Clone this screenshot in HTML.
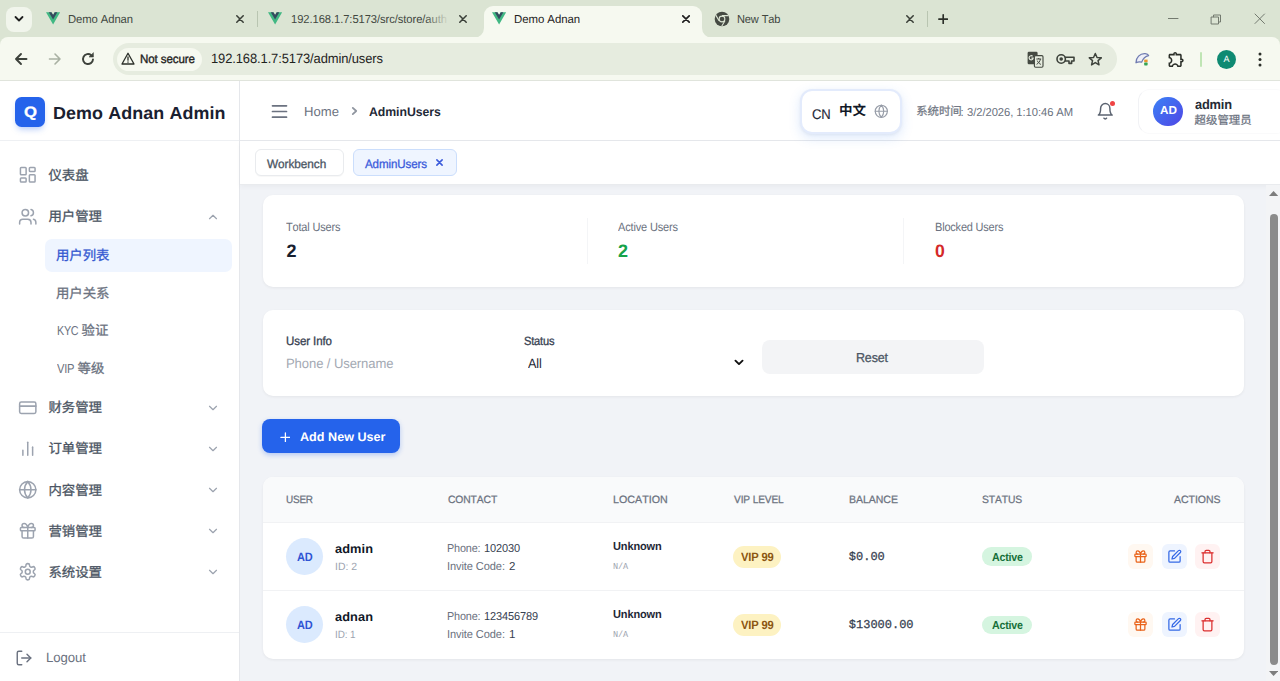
<!DOCTYPE html>
<html lang="en">
<head>
<meta charset="utf-8">
<title>Demo Adnan</title>
<style>
*{box-sizing:border-box;margin:0;padding:0}
html,body{width:1280px;height:681px;overflow:hidden;background:#f1f3f7}
body{font-family:"Liberation Sans",sans-serif;color:#1f2937;position:relative;-webkit-font-smoothing:antialiased;text-rendering:geometricPrecision;font-kerning:none}
.abs{position:absolute}
.tx{position:absolute;white-space:nowrap;line-height:1}
.b{font-weight:700}
.mono{font-family:"Liberation Mono",monospace}
.cj{display:inline-block;position:relative;vertical-align:top;white-space:nowrap;font-family:"Liberation Sans","Noto Sans CJK SC",sans-serif}
svg.ic{position:absolute;fill:none;stroke-linecap:round;stroke-linejoin:round}
/* ---------- browser chrome ---------- */
#tabstrip{left:0;top:0;width:1280px;height:48px;background:#dbe4d3}
#toolbar{left:0;top:37px;width:1280px;height:44px;background:#f6f9f0;border-bottom:1px solid #e0e4dc;border-radius:8px 8px 0 0}
#omni{left:113px;top:43px;width:1004px;height:32px;border-radius:16px;background:#e6ecdf}
#chip{left:117px;top:47.6px;width:85px;height:23.6px;border-radius:12px;background:#f6f9f0}
#tabsearch{left:6px;top:7px;width:26px;height:25px;border-radius:8px;background:#f1f5ec}
#acttab{left:484px;top:6px;width:218px;height:32px;background:#f6f9f0;border-radius:9px 9px 0 0}
/* ---------- app ---------- */
#sidebar{left:0;top:81px;width:240px;height:600px;background:#fff;border-right:1px solid #e5e7eb}
#header{left:240px;top:81px;width:1040px;height:60px;background:#fff;border-bottom:1px solid #e5e7eb}
#tabsbar{left:240px;top:141px;width:1040px;height:43.2px;background:#fff;box-shadow:0 1px 0 #e9ebee,0 3px 5px rgba(15,23,42,.035)}
.card{position:absolute;background:#fff;border-radius:10px;box-shadow:0 1px 3px rgba(0,0,0,.06)}
</style>
</head>
<body>

<!-- ================= BROWSER CHROME ================= -->
<div class="abs" id="tabstrip"></div>
<div class="abs" id="toolbar"></div>
<div class="abs" id="acttab"></div>
<div class="abs" id="tabsearch"></div>
<div class="abs" id="omni"></div>
<div class="abs" id="chip"></div>

<!-- tab search button -->
<svg class="ic" style="left:14px;top:15px" width="10" height="8" viewBox="0 0 10 8" stroke="#1f1f1f" stroke-width="1.8"><path d="M1.5 2 L5 5.5 L8.5 2"/></svg>
<!-- tab 1 -->
<svg class="abs" style="left:46px;top:12px" width="14.2" height="12.6" viewBox="0 0 256 221"><path fill="#41b883" d="M204.8 0H256L128 220.8 0 0h97.92L128 51.2 157.44 0h47.36Z"/><path fill="#35495e" d="M50.56 0 128 133.12 204.8 0h-47.36L128 51.2 97.92 0H50.56Z"/></svg>
<div class="tx" style="left:68.00px;top:14px;font-size:11.6px;letter-spacing:-0.086px;transform:scaleX(0.9729);transform-origin:0 0;color:#41473f">Demo Adnan</div>
<svg class="ic" style="left:236px;top:15px" width="8" height="8" viewBox="0 0 10 10" stroke="#3a3f38" stroke-width="1.9"><path d="M1 1 L9 9 M9 1 L1 9"/></svg>
<div class="abs" style="left:257px;top:11px;width:1px;height:16px;background:#b9c5b1"></div>
<!-- tab 2 -->
<svg class="abs" style="left:268px;top:12px" width="14.2" height="12.6" viewBox="0 0 256 221"><path fill="#41b883" d="M204.8 0H256L128 220.8 0 0h97.92L128 51.2 157.44 0h47.36Z"/><path fill="#35495e" d="M50.56 0 128 133.12 204.8 0h-47.36L128 51.2 97.92 0H50.56Z"/></svg>
<div class="tx" style="left:291.00px;top:14px;font-size:11.6px;letter-spacing:-0.078px;transform:scaleX(0.9662);transform-origin:0 0;color:#41473f">192.168.1.7:5173/src/store/auth</div>
<div class="abs" style="left:425px;top:8px;width:24px;height:22px;background:linear-gradient(90deg,rgba(219,228,211,0),#dbe4d3)"></div>
<svg class="ic" style="left:459px;top:15px" width="8" height="8" viewBox="0 0 10 10" stroke="#3a3f38" stroke-width="1.9"><path d="M1 1 L9 9 M9 1 L1 9"/></svg>
<!-- tab 3 active -->
<svg class="abs" style="left:474px;top:28px" width="10" height="10" viewBox="0 0 10 10"><path d="M10 0 V10 H0 A10 10 0 0 0 10 0Z" fill="#f6f9f0"/></svg>
<svg class="abs" style="left:702px;top:28px" width="10" height="10" viewBox="0 0 10 10"><path d="M0 0 V10 H10 A10 10 0 0 1 0 0Z" fill="#f6f9f0"/></svg>
<svg class="abs" style="left:492px;top:12px" width="14.2" height="12.6" viewBox="0 0 256 221"><path fill="#41b883" d="M204.8 0H256L128 220.8 0 0h97.92L128 51.2 157.44 0h47.36Z"/><path fill="#35495e" d="M50.56 0 128 133.12 204.8 0h-47.36L128 51.2 97.92 0H50.56Z"/></svg>
<div class="tx" style="left:514.00px;top:14px;font-size:11.6px;letter-spacing:-0.052px;transform:scaleX(0.9835);transform-origin:0 0;color:#1f231d">Demo Adnan</div>
<svg class="ic" style="left:682px;top:15px" width="8" height="8" viewBox="0 0 10 10" stroke="#1f1f1f" stroke-width="2.1"><path d="M1 1 L9 9 M9 1 L1 9"/></svg>
<!-- tab 4 -->
<svg class="abs" style="left:714px;top:11px" width="16" height="16" viewBox="0 0 16 16"><circle cx="8" cy="8" r="7.3" fill="#454a43"/><circle cx="8" cy="8" r="3.4" fill="#dbe4d3"/><circle cx="8" cy="8" r="2.3" fill="#454a43"/><path d="M8 4.6 H14.5 M5.05 9.7 L1.8 4.1 M10.95 9.7 L7.7 15.3" stroke="#dbe4d3" stroke-width="1.1" fill="none"/></svg>
<div class="tx" style="left:737.30px;top:14px;font-size:11.6px;letter-spacing:-0.146px;transform:scaleX(0.9535);transform-origin:0 0;color:#41473f">New Tab</div>
<svg class="ic" style="left:906px;top:15px" width="8" height="8" viewBox="0 0 10 10" stroke="#3a3f38" stroke-width="1.9"><path d="M1 1 L9 9 M9 1 L1 9"/></svg>
<div class="abs" style="left:927px;top:11px;width:1px;height:16px;background:#b9c5b1"></div>
<svg class="ic" style="left:938px;top:14px" width="10.4" height="10.4" viewBox="0 0 12 12" stroke="#2b2f29" stroke-width="1.9"><path d="M6 1 V11 M1 6 H11"/></svg>
<!-- window controls -->
<svg class="ic" style="left:1168px;top:13px" width="100" height="12" viewBox="0 0 100 12" stroke="#737a6f" stroke-width="1"><path d="M0 5.5 H10"/><path d="M43.5 4 H50.5 V11 H43.5Z M45.5 3.8 V2 H52.5 V9 H50.7"/><path d="M87 1 L96.5 10.5 M96.5 1 L87 10.5"/></svg>
<!-- nav buttons -->
<svg class="ic" style="left:14px;top:52px" width="14" height="14" viewBox="0 0 14 14" stroke="#3d423b" stroke-width="1.9"><path d="M12.5 7 H2 M7 2 L2 7 L7 12"/></svg>
<svg class="ic" style="left:48px;top:52px" width="14" height="14" viewBox="0 0 14 14" stroke="#a9b1a3" stroke-width="1.6"><path d="M1.5 7 H12 M7 2 L12 7 L7 12"/></svg>
<svg class="ic" style="left:81px;top:52px" width="14" height="14" viewBox="0 0 14 14" stroke="#3d423b" stroke-width="1.9"><path d="M12 7.4 A5 5 0 1 1 10.2 3.2"/><path d="M12.4 1 V5 H8.4 Z" fill="#3d423b" stroke-width="0.6"/></svg>
<!-- not secure chip -->
<svg class="ic" style="left:121px;top:52px" width="14" height="13" viewBox="0 0 14 13" stroke="#2b2f29" stroke-width="1.3"><path d="M7 1.2 L13 12 H1 Z"/><path d="M7 5 V8.2 M7 10 V10.2"/></svg>
<div class="tx" style="left:140.00px;top:53px;font-size:12px;letter-spacing:-0.101px;transform:scaleX(0.9630);transform-origin:0 0;color:#1f231d;-webkit-text-stroke:.35px #1f231d">Not secure</div>
<div class="tx" style="left:211.00px;top:52px;font-size:13.5px;letter-spacing:-0.115px;transform:scaleX(0.9594);transform-origin:0 0;color:#1f231d">192.168.1.7:5173/admin/users</div>
<!-- right toolbar icons -->
<svg class="abs" style="left:1027px;top:50.5px" width="17" height="17" viewBox="0 0 17 17"><rect x="0.6" y="0.8" width="10" height="12.4" rx="1.3" fill="#454a42"/><path d="M5.6 5.2 a2.1 2.1 0 1 0 0.7 1.9 H4.4" stroke="#e6ecdf" stroke-width="1.15" fill="none"/><rect x="7.4" y="4.6" width="8.6" height="11.6" rx="1.2" fill="#e6ecdf" stroke="#454a42" stroke-width="1.15"/><path d="M9.3 8 H14.2 M11.7 7 V8 M13.4 8 C13 10.6 11.4 12.4 9.6 13.3 M10.3 9.6 C10.9 11.4 12.3 12.8 13.9 13.4" stroke="#454a42" stroke-width="1" fill="none"/></svg>
<svg class="ic" style="left:1056px;top:53px" width="19" height="12" viewBox="0 0 19 12" stroke="#3d423b" stroke-width="1.6"><circle cx="5.2" cy="6" r="4.2"/><circle cx="5.2" cy="6" r="1" fill="#3d423b"/><path d="M9.4 4.3 H18 V8 H15.6 V10.4 H13 V8 H9.4"/></svg>
<svg class="ic" style="left:1088px;top:51.8px" width="14.6" height="14.6" viewBox="0 0 16 16" stroke="#3d423b" stroke-width="1.6"><path d="M8 1.6 L9.9 6 L14.6 6.4 L11 9.5 L12.1 14.1 L8 11.6 L3.9 14.1 L5 9.5 L1.4 6.4 L6.1 6 Z"/></svg>
<svg class="abs" style="left:1135px;top:52px" width="15" height="15" viewBox="0 0 15 15"><path d="M1 10.8 C0.8 5.6 5 1.2 10.2 1.6 C12 1.7 13.2 2.6 13.6 3.6 C10.6 4.2 8 6.6 6.6 10.2 C4.8 9.6 2.8 9.8 1 10.8 Z" fill="#eef0f8" stroke="#6f7bb0" stroke-width="1.3" stroke-linejoin="round"/><rect x="9.2" y="7.6" width="3.4" height="2.6" fill="#e9962f"/><rect x="9.2" y="10.6" width="3.4" height="2.8" rx=".6" fill="#37a452"/></svg>
<svg class="abs" style="left:1167.3px;top:49.6px" width="18.6" height="18.6" viewBox="0 0 24 24" fill="#2b2f29"><path d="M10.5 4.5c.28 0 .5.22.5.5v2h6v6h2c.28 0 .5.22.5.5s-.22.5-.5.5h-2v6h-2.12c-.68-1.75-2.39-3-4.38-3s-3.7 1.25-4.38 3H4v-2.12c1.75-.68 3-2.39 3-4.38 0-1.99-1.24-3.7-2.99-4.38L4 7h6V5c0-.28.22-.5.5-.5m0-2C9.12 2.5 8 3.62 8 5H4c-1.1 0-1.99.9-1.99 2v3.8h.29c1.49 0 2.7 1.21 2.7 2.7s-1.21 2.7-2.7 2.7H2V20c0 1.1.9 2 2 2h3.8v-.3c0-1.49 1.21-2.7 2.7-2.7s2.7 1.21 2.7 2.7v.3H17c1.1 0 2-.9 2-2v-4c1.38 0 2.5-1.12 2.5-2.5S20.38 11 19 11V7c0-1.1-.9-2-2-2h-4c0-1.38-1.12-2.5-2.5-2.5z"/></svg>
<div class="abs" style="left:1200px;top:52px;width:2px;height:15px;background:#bfe5b4;border-radius:1px"></div>
<div class="abs" style="left:1217.3px;top:50px;width:18.6px;height:18.6px;border-radius:10px;background:#0f8a72"></div>
<div class="tx" style="left:1223.60px;top:55px;font-size:9px;color:#fff">A</div>
<svg class="abs" style="left:1258px;top:52px" width="4" height="15" viewBox="0 0 4 15" fill="#2b2f29"><circle cx="2" cy="2" r="1.5"/><circle cx="2" cy="7.5" r="1.5"/><circle cx="2" cy="13" r="1.5"/></svg>


<!-- ================= APP ================= -->
<div class="abs" id="sidebar"></div>
<div class="abs" id="header"></div>
<div class="abs" id="tabsbar"></div>
<!-- sidebar -->
<div class="abs" style="left:15.1px;top:96.8px;width:29.8px;height:29.8px;border-radius:6.5px;background:#2563eb;box-shadow:0 4px 6px -2px rgba(37,99,235,.35)"></div>
<div class="tx b" style="left:23.50px;top:105px;font-size:15px;letter-spacing:0.000px;transform:scaleX(1.1140);transform-origin:0 0;color:#fff;-webkit-text-stroke:.3px #fff">Q</div>
<div class="tx b" style="left:53.20px;top:105px;font-size:17.5px;letter-spacing:0.106px;transform:scaleX(1.0221);transform-origin:0 0;color:#1a2030">Demo Adnan Admin</div>
<div class="abs" style="left:0;top:140px;width:239px;height:1px;background:#eef0f3"></div>
<svg class="ic" style="left:18.3px;top:165.45px" width="19.5" height="19.5" viewBox="0 0 24 24" stroke="#9ca3af" stroke-width="1.85"><rect width="7" height="9" x="3" y="3" rx="1"/><rect width="7" height="5" x="14" y="3" rx="1"/><rect width="7" height="9" x="14" y="12" rx="1"/><rect width="7" height="5" x="3" y="16" rx="1"/></svg>
<div class="abs" style="left:48.4px;top:168.9px"><span class="cj" style="width:40.2px;height:12.998px;line-height:12.998px;font-size:13.4px;color:#4b5563;-webkit-text-stroke:.3px #4b5563">仪表盘</span></div>
<svg class="ic" style="left:18.3px;top:206.65px" width="19.5" height="19.5" viewBox="0 0 24 24" stroke="#9ca3af" stroke-width="1.85"><path d="M16 21v-2a4 4 0 0 0-4-4H6a4 4 0 0 0-4 4v2"/><circle cx="9" cy="7" r="4"/><path d="M22 21v-2a4 4 0 0 0-3-3.87"/><path d="M16 3.13a4 4 0 0 1 0 7.75"/></svg>
<div class="abs" style="left:48.4px;top:210.1px"><span class="cj" style="width:53.6px;height:12.998px;line-height:12.998px;font-size:13.4px;color:#4b5563;-webkit-text-stroke:.3px #4b5563">用户管理</span></div>
<svg class="ic" style="left:206px;top:209.6px" width="14" height="14" viewBox="0 0 24 24" stroke="#9ca3af" stroke-width="2"><path d="m18 15-6-6-6 6"/></svg>
<svg class="ic" style="left:18.3px;top:397.65px" width="19.5" height="19.5" viewBox="0 0 24 24" stroke="#9ca3af" stroke-width="1.85"><rect width="20" height="14" x="2" y="5" rx="2"/><line x1="2" x2="22" y1="10" y2="10"/></svg>
<div class="abs" style="left:48.4px;top:401.1px"><span class="cj" style="width:53.6px;height:12.998px;line-height:12.998px;font-size:13.4px;color:#4b5563;-webkit-text-stroke:.3px #4b5563">财务管理</span></div>
<svg class="ic" style="left:206px;top:400.6px" width="14" height="14" viewBox="0 0 24 24" stroke="#9ca3af" stroke-width="2"><path d="m6 9 6 6 6-6"/></svg>
<svg class="ic" style="left:18.3px;top:438.85px" width="19.5" height="19.5" viewBox="0 0 24 24" stroke="#9ca3af" stroke-width="1.85"><line x1="18" x2="18" y1="20" y2="10"/><line x1="12" x2="12" y1="20" y2="4"/><line x1="6" x2="6" y1="20" y2="14"/></svg>
<div class="abs" style="left:48.4px;top:442.3px"><span class="cj" style="width:53.6px;height:12.998px;line-height:12.998px;font-size:13.4px;color:#4b5563;-webkit-text-stroke:.3px #4b5563">订单管理</span></div>
<svg class="ic" style="left:206px;top:441.8px" width="14" height="14" viewBox="0 0 24 24" stroke="#9ca3af" stroke-width="2"><path d="m6 9 6 6 6-6"/></svg>
<svg class="ic" style="left:18.3px;top:480.05px" width="19.5" height="19.5" viewBox="0 0 24 24" stroke="#9ca3af" stroke-width="1.85"><circle cx="12" cy="12" r="10"/><path d="M12 2a14.5 14.5 0 0 0 0 20 14.5 14.5 0 0 0 0-20"/><path d="M2 12h20"/></svg>
<div class="abs" style="left:48.4px;top:483.5px"><span class="cj" style="width:53.6px;height:12.998px;line-height:12.998px;font-size:13.4px;color:#4b5563;-webkit-text-stroke:.3px #4b5563">内容管理</span></div>
<svg class="ic" style="left:206px;top:483px" width="14" height="14" viewBox="0 0 24 24" stroke="#9ca3af" stroke-width="2"><path d="m6 9 6 6 6-6"/></svg>
<svg class="ic" style="left:18.3px;top:521.25px" width="19.5" height="19.5" viewBox="0 0 24 24" stroke="#9ca3af" stroke-width="1.85"><rect x="3" y="8" width="18" height="4" rx="1"/><path d="M12 8v13"/><path d="M19 12v7a2 2 0 0 1-2 2H7a2 2 0 0 1-2-2v-7"/><path d="M7.5 8a2.5 2.5 0 0 1 0-5A4.8 8 0 0 1 12 8a4.8 8 0 0 1 4.5-5 2.5 2.5 0 0 1 0 5"/></svg>
<div class="abs" style="left:48.4px;top:524.7px"><span class="cj" style="width:53.6px;height:12.998px;line-height:12.998px;font-size:13.4px;color:#4b5563;-webkit-text-stroke:.3px #4b5563">营销管理</span></div>
<svg class="ic" style="left:206px;top:524.2px" width="14" height="14" viewBox="0 0 24 24" stroke="#9ca3af" stroke-width="2"><path d="m6 9 6 6 6-6"/></svg>
<svg class="ic" style="left:18.3px;top:562.45px" width="19.5" height="19.5" viewBox="0 0 24 24" stroke="#9ca3af" stroke-width="1.85"><path d="M12.22 2h-.44a2 2 0 0 0-2 2v.18a2 2 0 0 1-1 1.73l-.43.25a2 2 0 0 1-2 0l-.15-.08a2 2 0 0 0-2.73.73l-.22.38a2 2 0 0 0 .73 2.73l.15.1a2 2 0 0 1 1 1.72v.51a2 2 0 0 1-1 1.74l-.15.09a2 2 0 0 0-.73 2.73l.22.38a2 2 0 0 0 2.73.73l.15-.08a2 2 0 0 1 2 0l.43.25a2 2 0 0 1 1 1.73V20a2 2 0 0 0 2 2h.44a2 2 0 0 0 2-2v-.18a2 2 0 0 1 1-1.73l.43-.25a2 2 0 0 1 2 0l.15.08a2 2 0 0 0 2.73-.73l.22-.39a2 2 0 0 0-.73-2.73l-.15-.08a2 2 0 0 1-1-1.74v-.5a2 2 0 0 1 1-1.74l.15-.09a2 2 0 0 0 .73-2.73l-.22-.38a2 2 0 0 0-2.73-.73l-.15.08a2 2 0 0 1-2 0l-.43-.25a2 2 0 0 1-1-1.73V4a2 2 0 0 0-2-2z"/><circle cx="12" cy="12" r="3"/></svg>
<div class="abs" style="left:48.4px;top:565.9px"><span class="cj" style="width:53.6px;height:12.998px;line-height:12.998px;font-size:13.4px;color:#4b5563;-webkit-text-stroke:.3px #4b5563">系统设置</span></div>
<svg class="ic" style="left:206px;top:565.4px" width="14" height="14" viewBox="0 0 24 24" stroke="#9ca3af" stroke-width="2"><path d="m6 9 6 6 6-6"/></svg>
<div class="abs" style="left:45.2px;top:239.1px;width:186.6px;height:33.2px;border-radius:7px;background:#eff5ff"></div>
<div class="abs" style="left:55.9px;top:249px"><span class="cj" style="width:53.6px;height:12.998px;line-height:12.998px;font-size:13.4px;color:#3559d1;-webkit-text-stroke:.3px #3559d1">用户列表</span></div>
<div class="abs" style="left:55.9px;top:287px"><span class="cj" style="width:53.6px;height:12.998px;line-height:12.998px;font-size:13.4px;color:#6b7280;-webkit-text-stroke:.3px #6b7280">用户关系</span></div>
<div class="tx" style="left:56.80px;top:324px;font-size:13px;letter-spacing:-0.300px;transform:scaleX(0.8267);transform-origin:0 0;color:#6b7280">KYC</div>
<div class="abs" style="left:81.6px;top:324.2px"><span class="cj" style="width:26.8px;height:12.998px;line-height:12.998px;font-size:13.4px;color:#6b7280;-webkit-text-stroke:.3px #6b7280">验证</span></div>
<div class="tx" style="left:56.80px;top:362px;font-size:13px;letter-spacing:-0.300px;transform:scaleX(0.8597);transform-origin:0 0;color:#6b7280">VIP</div>
<div class="abs" style="left:77.5px;top:361.6px"><span class="cj" style="width:26.8px;height:12.998px;line-height:12.998px;font-size:13.4px;color:#6b7280;-webkit-text-stroke:.3px #6b7280">等级</span></div>
<div class="abs" style="left:0;top:632px;width:239px;height:1px;background:#eef0f3"></div>
<svg class="ic" style="left:15px;top:648.5px" width="18" height="18" viewBox="0 0 24 24" stroke="#6b7280" stroke-width="1.9"><path d="M9 21H5a2 2 0 0 1-2-2V5a2 2 0 0 1 2-2h4"/><polyline points="16 17 21 12 16 7"/><line x1="21" x2="9" y1="12" y2="12"/></svg>
<div class="tx" style="left:45.80px;top:651px;font-size:13.5px;letter-spacing:-0.078px;transform:scaleX(0.9778);transform-origin:0 0;color:#6b7280">Logout</div>
<!-- header -->
<svg class="ic" style="left:271px;top:104px" width="17" height="15" viewBox="0 0 17 15" stroke="#6b7280" stroke-width="1.7"><path d="M1.5 1.8 H15.5 M1.5 7.5 H15.5 M1.5 13.2 H15.5"/></svg>
<div class="tx" style="left:304.00px;top:105px;font-size:13px;letter-spacing:0.032px;transform:scaleX(1.0064);transform-origin:0 0;color:#6b7280">Home</div>
<svg class="ic" style="left:350.7px;top:106.45px" width="8" height="10" viewBox="0 0 8 10" stroke="#8f959f" stroke-width="1.8"><path d="M1.8 1.9 L5.2 5 L1.8 8.1"/></svg>
<div class="tx b" style="left:369.20px;top:106px;font-size:12.5px;letter-spacing:-0.061px;transform:scaleX(0.9824);transform-origin:0 0;color:#1f2937">AdminUsers</div>
<div class="abs" style="left:799.6px;top:89px;width:102px;height:44.8px;border-radius:12px;background:#fff;border:2px solid #e3ebfc;box-shadow:0 4px 12px rgba(59,130,246,.17),0 1px 3px rgba(0,0,0,.05)"></div>
<div class="tx" style="left:812.40px;top:107px;font-size:14px;letter-spacing:-0.300px;transform:scaleX(0.9339);transform-origin:0 0;color:#1f2937;-webkit-text-stroke:.15px #1f2937">CN</div>
<div class="abs" style="left:839px;top:104.5px"><span class="cj" style="width:27px;height:12.15px;line-height:12.15px;font-size:13.5px;font-weight:700;color:#111827">中文</span></div>
<svg class="ic" style="left:874.2px;top:104px" width="14.6" height="14.6" viewBox="0 0 24 24" stroke="#979da8" stroke-width="1.9"><circle cx="12" cy="12" r="10"/><path d="M12 2a14.5 14.5 0 0 0 0 20 14.5 14.5 0 0 0 0-20"/><path d="M2 12h20"/></svg>
<div class="abs" style="left:916.2px;top:106.6px"><span class="cj" style="width:45.6px;height:11.058px;line-height:11.058px;font-size:11.4px;color:#727884;-webkit-text-stroke:.25px #727884">系统时间</span></div>
<div class="tx" style="left:960.60px;top:108px;font-size:11.5px;color:#6b7280">:</div>
<div class="tx" style="left:967.40px;top:108px;font-size:11.5px;letter-spacing:-0.060px;transform:scaleX(0.9752);transform-origin:0 0;color:#6b7280">3/2/2026, 1:10:46 AM</div>
<svg class="ic" style="left:1096.3px;top:102.2px" width="18.5" height="18.5" viewBox="0 0 24 24" stroke="#5b6370" stroke-width="1.9"><path d="M6 8a6 6 0 0 1 12 0c0 7 3 9 3 9H3s3-2 3-9"/><path d="M10.3 21a1.94 1.94 0 0 0 3.4 0"/></svg>
<div class="abs" style="left:1110.4px;top:101.2px;width:5px;height:5px;border-radius:3px;background:#ef4444"></div>
<div class="abs" style="left:1138px;top:89px;width:150px;height:45px;border-radius:12px;border:1px solid #fafafb;border-left-color:#f1f2f5;border-right:none"></div>
<div class="abs" style="left:1153.3px;top:96.6px;width:29.8px;height:29.8px;border-radius:15px;background:linear-gradient(135deg,#3b82f6,#4f46e5)"></div>
<div class="tx b" style="left:1159.50px;top:106px;font-size:11.5px;letter-spacing:0.118px;transform:scaleX(1.0165);transform-origin:0 0;color:#fff">AD</div>
<div class="tx b" style="left:1195.00px;top:98px;font-size:13.5px;letter-spacing:-0.207px;transform:scaleX(0.9504);transform-origin:0 0;color:#262b36">admin</div>
<div class="abs" style="left:1194.6px;top:116px"><span class="cj" style="width:57px;height:11.172px;line-height:11.172px;font-size:11.4px;color:#6b7280;-webkit-text-stroke:.25px #6b7280">超级管理员</span></div>
<div class="abs" style="left:254.8px;top:149px;width:89.6px;height:27px;border-radius:6px;background:#fff;border:1px solid #e9ebee;box-shadow:0 1px 1px rgba(0,0,0,.03)"></div>
<div class="tx" style="left:267.00px;top:158px;font-size:12px;letter-spacing:-0.055px;transform:scaleX(0.9827);transform-origin:0 0;color:#4b5563;-webkit-text-stroke:.3px #4b5563">Workbench</div>
<div class="abs" style="left:353px;top:149px;width:104px;height:27px;border-radius:6px;background:#eff5ff;border:1px solid #cbdefc"></div>
<div class="tx" style="left:365.00px;top:158px;font-size:12px;letter-spacing:-0.112px;transform:scaleX(0.9635);transform-origin:0 0;color:#3b5bdb;-webkit-text-stroke:.3px #3b5bdb">AdminUsers</div>
<svg class="ic" style="left:436.2px;top:159.4px" width="7" height="7" viewBox="0 0 8 8" stroke="#3b5bdb" stroke-width="1.8"><path d="M1 1 L7 7 M7 1 L1 7"/></svg>
<!-- content -->
<div class="card" style="left:263px;top:195px;width:981px;height:91.7px"></div>
<div class="abs" style="left:587px;top:218px;width:1px;height:46px;background:#f4f5f7"></div>
<div class="abs" style="left:903px;top:218px;width:1px;height:46px;background:#f4f5f7"></div>
<div class="tx" style="left:286.40px;top:221px;font-size:12px;letter-spacing:-0.204px;transform:scaleX(0.9177);transform-origin:0 0;color:#6b7280">Total Users</div>
<div class="tx b" style="left:286.50px;top:242px;font-size:18px;color:#18202f">2</div>
<div class="tx" style="left:618.20px;top:221px;font-size:12px;letter-spacing:-0.200px;transform:scaleX(0.9211);transform-origin:0 0;color:#6b7280">Active Users</div>
<div class="tx b" style="left:618.00px;top:242px;font-size:18px;color:#16a34a">2</div>
<div class="tx" style="left:935.20px;top:221px;font-size:12px;letter-spacing:-0.222px;transform:scaleX(0.9169);transform-origin:0 0;color:#6b7280">Blocked Users</div>
<div class="tx b" style="left:934.90px;top:242px;font-size:18px;letter-spacing:0.000px;transform:scaleX(0.9792);transform-origin:0 0;color:#d42929">0</div>
<div class="card" style="left:263px;top:309.6px;width:981px;height:86.6px"></div>
<div class="tx" style="left:286.00px;top:335px;font-size:12px;letter-spacing:-0.101px;transform:scaleX(0.9608);transform-origin:0 0;color:#374151;-webkit-text-stroke:.3px #374151">User Info</div>
<div class="tx" style="left:286.00px;top:357px;font-size:13.5px;letter-spacing:-0.101px;transform:scaleX(0.9681);transform-origin:0 0;color:#a3a9b3">Phone / Username</div>
<div class="tx" style="left:524.00px;top:335px;font-size:12px;letter-spacing:-0.211px;transform:scaleX(0.9253);transform-origin:0 0;color:#374151;-webkit-text-stroke:.3px #374151">Status</div>
<div class="tx" style="left:528.00px;top:357px;font-size:13.5px;letter-spacing:-0.195px;transform:scaleX(0.9378);transform-origin:0 0;color:#1f2937">All</div>
<svg class="ic" style="left:734px;top:359px" width="10" height="7.3" viewBox="0 0 11 8" stroke="#111" stroke-width="2.1"><path d="M1.6 1.8 L5.5 5.6 L9.4 1.8"/></svg>
<div class="abs" style="left:761.8px;top:340.4px;width:222.2px;height:33.4px;border-radius:8px;background:#f3f4f6"></div>
<div class="tx" style="left:856.00px;top:351px;font-size:13px;letter-spacing:-0.147px;transform:scaleX(0.9590);transform-origin:0 0;color:#4b5563;-webkit-text-stroke:.3px #4b5563">Reset</div>
<div class="abs" style="left:262.1px;top:419.4px;width:138px;height:33.7px;border-radius:8px;background:#2563eb;box-shadow:0 2px 5px rgba(37,99,235,.3)"></div>
<svg class="ic" style="left:279.6px;top:431.6px" width="10.8" height="10.8" viewBox="0 0 12 12" stroke="#fff" stroke-width="1.4"><path d="M6 1 V11 M1 6 H11"/></svg>
<div class="tx b" style="left:300.00px;top:431px;font-size:12.5px;letter-spacing:0.021px;transform:scaleX(1.0063);transform-origin:0 0;color:#fff">Add New User</div>
<div class="card" style="left:263px;top:477px;width:981px;height:182px;overflow:hidden"><div style="height:45.5px;background:#f9fafb;border-bottom:1px solid #f1f2f4"></div><div style="height:68px;border-bottom:1px solid #f1f2f4"></div></div>
<div class="tx" style="left:286.00px;top:495px;font-size:10.6px;letter-spacing:-0.245px;transform:scaleX(0.9403);transform-origin:0 0;color:#6b7280;-webkit-text-stroke:.25px #6b7280">USER</div>
<div class="tx" style="left:447.50px;top:495px;font-size:10.6px;letter-spacing:-0.097px;transform:scaleX(0.9727);transform-origin:0 0;color:#6b7280;-webkit-text-stroke:.25px #6b7280">CONTACT</div>
<div class="tx" style="left:612.80px;top:495px;font-size:10.6px;letter-spacing:0.026px;transform:scaleX(1.0078);transform-origin:0 0;color:#6b7280;-webkit-text-stroke:.25px #6b7280">LOCATION</div>
<div class="tx" style="left:733.60px;top:495px;font-size:10.6px;letter-spacing:-0.125px;transform:scaleX(0.9549);transform-origin:0 0;color:#6b7280;-webkit-text-stroke:.25px #6b7280">VIP LEVEL</div>
<div class="tx" style="left:848.60px;top:495px;font-size:10.6px;letter-spacing:-0.025px;transform:scaleX(0.9930);transform-origin:0 0;color:#6b7280;-webkit-text-stroke:.25px #6b7280">BALANCE</div>
<div class="tx" style="left:981.80px;top:495px;font-size:10.6px;letter-spacing:-0.092px;transform:scaleX(0.9729);transform-origin:0 0;color:#6b7280;-webkit-text-stroke:.25px #6b7280">STATUS</div>
<div class="tx" style="left:1174.30px;top:495px;font-size:10.6px;letter-spacing:-0.031px;transform:scaleX(0.9908);transform-origin:0 0;color:#6b7280;-webkit-text-stroke:.25px #6b7280">ACTIONS</div>
<div class="abs" style="left:286.2px;top:537.8px;width:37px;height:37px;border-radius:50%;background:#dbeafe"></div>
<div class="tx b" style="left:296.70px;top:551px;font-size:12px;letter-spacing:-0.300px;transform:scaleX(0.9161);transform-origin:0 0;color:#2f55d4">AD</div>
<div class="tx b" style="left:335.20px;top:543px;font-size:12.5px;letter-spacing:0.089px;transform:scaleX(1.0224);transform-origin:0 0;color:#111827">admin</div>
<div class="tx" style="left:335.20px;top:562px;font-size:10.5px;letter-spacing:-0.013px;transform:scaleX(0.9944);transform-origin:0 0;color:#9ca3af">ID: 2</div>
<div class="tx" style="left:447.10px;top:544px;font-size:11.5px;letter-spacing:-0.177px;transform:scaleX(0.9421);transform-origin:0 0;color:#6b7280">Phone:</div>
<div class="tx" style="left:484.10px;top:544px;font-size:11.5px;letter-spacing:-0.143px;transform:scaleX(0.9558);transform-origin:0 0;color:#374151">102030</div>
<div class="tx" style="left:447.10px;top:562px;font-size:11.5px;letter-spacing:-0.092px;transform:scaleX(0.9610);transform-origin:0 0;color:#6b7280">Invite Code:</div>
<div class="tx" style="left:508.90px;top:562px;font-size:11.5px;color:#374151">2</div>
<div class="tx b" style="left:612.80px;top:542px;font-size:11.5px;letter-spacing:-0.152px;transform:scaleX(0.9580);transform-origin:0 0;color:#1f2937">Unknown</div>
<div class="tx mono" style="left:613.00px;top:563px;font-size:9px;letter-spacing:-0.180px;transform:scaleX(0.9470);transform-origin:0 0;color:#9ca3af">N/A</div>
<div class="abs" style="left:733.3px;top:545.8px;width:48px;height:22px;border-radius:11px;background:#fdf2c2"></div>
<div class="tx b" style="left:741.00px;top:551px;font-size:12px;letter-spacing:-0.198px;transform:scaleX(0.9335);transform-origin:0 0;color:#8c5712">VIP 99</div>
<div class="tx mono" style="left:848.80px;top:551px;font-size:12px;letter-spacing:0.000px;color:#374151;-webkit-text-stroke:.25px #374151">$0.00</div>
<div class="abs" style="left:981.8px;top:547.2px;width:50.2px;height:18.4px;border-radius:9.2px;background:#d5f5e0"></div>
<div class="tx b" style="left:991.60px;top:553px;font-size:11.5px;letter-spacing:-0.211px;transform:scaleX(0.9265);transform-origin:0 0;color:#17703a">Active</div>
<div class="abs" style="left:1127.6px;top:543.6px;width:25px;height:25.5px;border-radius:6px;background:#fff8f1"></div><svg class="ic" style="left:1132.6px;top:548.8px" width="15" height="15" viewBox="0 0 24 24" stroke="#e9631a" stroke-width="2"><rect x="3" y="8" width="18" height="4" rx="1"/><path d="M12 8v13"/><path d="M19 12v7a2 2 0 0 1-2 2H7a2 2 0 0 1-2-2v-7"/><path d="M7.5 8a2.5 2.5 0 0 1 0-5A4.8 8 0 0 1 12 8a4.8 8 0 0 1 4.5-5 2.5 2.5 0 0 1 0 5"/></svg>
<div class="abs" style="left:1161.5px;top:543.6px;width:25px;height:25.5px;border-radius:6px;background:#eef4ff"></div><svg class="ic" style="left:1166.5px;top:548.8px" width="15" height="15" viewBox="0 0 24 24" stroke="#3569e6" stroke-width="2"><path d="M12 3H5a2 2 0 0 0-2 2v14a2 2 0 0 0 2 2h14a2 2 0 0 0 2-2v-7"/><path d="M18.375 2.625a2.121 2.121 0 1 1 3 3L12 15l-4 1 1-4Z"/></svg>
<div class="abs" style="left:1195.2px;top:543.6px;width:25px;height:25.5px;border-radius:6px;background:#fff2f2"></div><svg class="ic" style="left:1200.2px;top:548.8px" width="15" height="15" viewBox="0 0 24 24" stroke="#db2e2e" stroke-width="2"><path d="M3 6h18"/><path d="M19 6v14c0 1-1 2-2 2H7c-1 0-2-1-2-2V6"/><path d="M8 6V4c0-1 1-2 2-2h4c1 0 2 1 2 2v2"/></svg>
<div class="abs" style="left:286.2px;top:606.1px;width:37px;height:37px;border-radius:50%;background:#dbeafe"></div>
<div class="tx b" style="left:296.70px;top:619px;font-size:12px;letter-spacing:-0.300px;transform:scaleX(0.9161);transform-origin:0 0;color:#2f55d4">AD</div>
<div class="tx b" style="left:335.20px;top:611px;font-size:12.5px;letter-spacing:0.089px;transform:scaleX(1.0224);transform-origin:0 0;color:#111827">adnan</div>
<div class="tx" style="left:335.20px;top:630px;font-size:10.5px;letter-spacing:-0.126px;transform:scaleX(0.9459);transform-origin:0 0;color:#9ca3af">ID: 1</div>
<div class="tx" style="left:447.10px;top:612px;font-size:11.5px;letter-spacing:-0.177px;transform:scaleX(0.9421);transform-origin:0 0;color:#6b7280">Phone:</div>
<div class="tx" style="left:484.10px;top:612px;font-size:11.5px;letter-spacing:-0.133px;transform:scaleX(0.9559);transform-origin:0 0;color:#374151">123456789</div>
<div class="tx" style="left:447.10px;top:630px;font-size:11.5px;letter-spacing:-0.092px;transform:scaleX(0.9610);transform-origin:0 0;color:#6b7280">Invite Code:</div>
<div class="tx" style="left:508.90px;top:630px;font-size:11.5px;color:#374151">1</div>
<div class="tx b" style="left:612.80px;top:610px;font-size:11.5px;letter-spacing:-0.152px;transform:scaleX(0.9580);transform-origin:0 0;color:#1f2937">Unknown</div>
<div class="tx mono" style="left:613.00px;top:631px;font-size:9px;letter-spacing:-0.180px;transform:scaleX(0.9470);transform-origin:0 0;color:#9ca3af">N/A</div>
<div class="abs" style="left:733.3px;top:614.1px;width:48px;height:22px;border-radius:11px;background:#fdf2c2"></div>
<div class="tx b" style="left:741.00px;top:619px;font-size:12px;letter-spacing:-0.198px;transform:scaleX(0.9335);transform-origin:0 0;color:#8c5712">VIP 99</div>
<div class="tx mono" style="left:848.80px;top:619px;font-size:12px;letter-spacing:-0.004px;color:#374151;-webkit-text-stroke:.25px #374151">$13000.00</div>
<div class="abs" style="left:981.8px;top:615.5px;width:50.2px;height:18.4px;border-radius:9.2px;background:#d5f5e0"></div>
<div class="tx b" style="left:991.60px;top:621px;font-size:11.5px;letter-spacing:-0.211px;transform:scaleX(0.9265);transform-origin:0 0;color:#17703a">Active</div>
<div class="abs" style="left:1127.6px;top:611.9px;width:25px;height:25.5px;border-radius:6px;background:#fff8f1"></div><svg class="ic" style="left:1132.6px;top:617.1px" width="15" height="15" viewBox="0 0 24 24" stroke="#e9631a" stroke-width="2"><rect x="3" y="8" width="18" height="4" rx="1"/><path d="M12 8v13"/><path d="M19 12v7a2 2 0 0 1-2 2H7a2 2 0 0 1-2-2v-7"/><path d="M7.5 8a2.5 2.5 0 0 1 0-5A4.8 8 0 0 1 12 8a4.8 8 0 0 1 4.5-5 2.5 2.5 0 0 1 0 5"/></svg>
<div class="abs" style="left:1161.5px;top:611.9px;width:25px;height:25.5px;border-radius:6px;background:#eef4ff"></div><svg class="ic" style="left:1166.5px;top:617.1px" width="15" height="15" viewBox="0 0 24 24" stroke="#3569e6" stroke-width="2"><path d="M12 3H5a2 2 0 0 0-2 2v14a2 2 0 0 0 2 2h14a2 2 0 0 0 2-2v-7"/><path d="M18.375 2.625a2.121 2.121 0 1 1 3 3L12 15l-4 1 1-4Z"/></svg>
<div class="abs" style="left:1195.2px;top:611.9px;width:25px;height:25.5px;border-radius:6px;background:#fff2f2"></div><svg class="ic" style="left:1200.2px;top:617.1px" width="15" height="15" viewBox="0 0 24 24" stroke="#db2e2e" stroke-width="2"><path d="M3 6h18"/><path d="M19 6v14c0 1-1 2-2 2H7c-1 0-2-1-2-2V6"/><path d="M8 6V4c0-1 1-2 2-2h4c1 0 2 1 2 2v2"/></svg>
<div class="abs" style="left:1266px;top:185px;width:14px;height:496px;background:#f3f4f6"></div>
<div class="abs" style="left:1269.5px;top:214px;width:8px;height:451px;border-radius:4px;background:#8b8b8b"></div>
<svg class="abs" style="left:1269.3px;top:190.8px" width="9.2" height="5" viewBox="0 0 8 4.2"><path d="M4 0 L8 4.2 H0Z" fill="#7d7d7d"/></svg>
<svg class="abs" style="left:1269.3px;top:670.8px" width="9.2" height="5" viewBox="0 0 8 4.2"><path d="M4 4.2 L8 0 H0Z" fill="#7d7d7d"/></svg>


</body>
</html>
